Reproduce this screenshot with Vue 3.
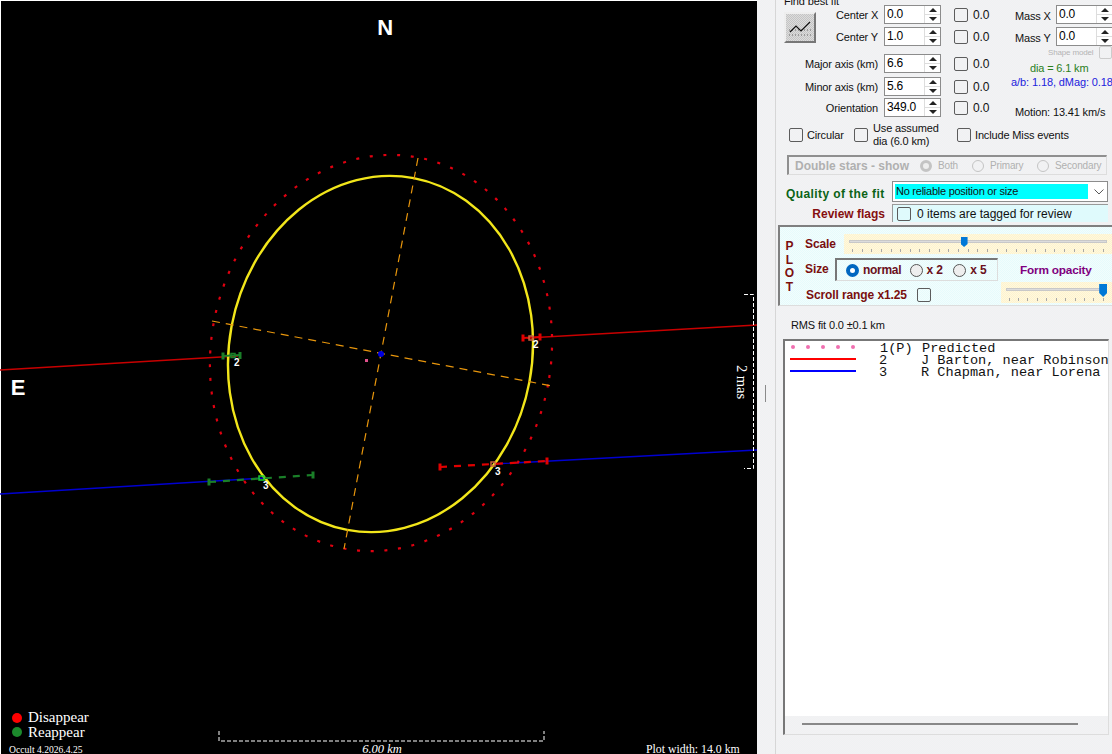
<template>
  <div class="app">
    <div class="plot">
      <svg class="plot-svg" viewBox="0 0 757 754" width="757" height="754">
        <!-- chords -->
        <path d="M0 370 L238 356 M527 338 L757 325" stroke="#c80000" stroke-width="1.4" fill="none" />
        <path d="M0 494 L265 478 M493 464 L757 450" stroke="#0000d0" stroke-width="1.4" fill="none" />

        <!-- predicted + fitted shape -->
        <ellipse cx="381" cy="353" rx="170" ry="199" transform="rotate(10.7 381 353)" fill="none" stroke="#e00010" stroke-width="2.2" stroke-dasharray="3 10.7" />
        <ellipse cx="380.5" cy="354" rx="151.500" ry="179" transform="rotate(10.7 380.5 354)" fill="none" stroke="#f2e61a" stroke-width="2.4" />
        <path d="M418 158 L344 549 M212 321 L552 386" stroke="#e8960c" stroke-width="1.2" stroke-dasharray="8 6" fill="none" />
        <circle cx="381" cy="354" r="3" fill="#0000e0" />
        <rect x="365" y="359" width="3" height="3" fill="#e0508c" />

        <!-- event markers -->
        <g stroke="#1a7f28" fill="none" stroke-width="2">
          <path d="M223 356 L240 355" />
          <path d="M223 352.500 V359.500 M240 352 V359" stroke-width="3" />
          <rect x="231" y="353.500" width="4" height="4" stroke-width="1.5" />
          <path d="M209 482 L313 475" stroke-dasharray="7 7" stroke-width="2.2" />
          <path d="M209 478.500 V485.500 M313 471.500 V478.500" stroke-width="3" />
          <rect x="259" y="476" width="5" height="4" stroke="#18d030" stroke-width="1.5" />
        </g>
        <g stroke="#e00000" fill="none" stroke-width="2">
          <path d="M523 338 L540 337" />
          <path d="M523 334.500 V341.500 M540 333.500 V340.500" stroke-width="3" />
          <path d="M440 467 L547 461" stroke-dasharray="7 7" stroke-width="2.2" />
          <path d="M440 463.500 V470.500 M547 457.500 V464.500" stroke-width="3" />
          <rect x="491" y="462" width="4" height="4" stroke="#c8603c" stroke-width="1.5" />
          <rect x="529" y="336" width="4" height="4" stroke="#c8603c" stroke-width="1.5" />
        </g>
        <g class="chord-no">
          <text x="234" y="366">2</text>
          <text x="533" y="348">2</text>
          <text x="263" y="489">3</text>
          <text x="495" y="475">3</text>
        </g>

        <text class="compass" x="385" y="35" text-anchor="middle">N</text>
        <text class="compass" x="18" y="395" text-anchor="middle">E</text>

        <!-- scale bars -->
        <path d="M219 731 V741 H544 V731" class="scale-line" />
        <path d="M744 294.500 H753.500 V468.500 H744" class="scale-line" />
        <text class="serif small" x="382" y="753" text-anchor="middle" font-style="italic">6.00 km</text>
        <text class="serif mas" transform="translate(737 382) rotate(90)" text-anchor="middle">2 mas</text>
        <text class="serif plot-width" x="646" y="753">Plot width: 14.0 km</text>

        <circle cx="17" cy="718" r="5" fill="#ff0000" />
        <circle cx="17" cy="732" r="5" fill="#1c8a2c" />
        <text class="serif legend" x="28" y="722">Disappear</text>
        <text class="serif legend" x="28" y="737">Reappear</text>
        <text class="serif tiny" x="9" y="753">Occult 4.2026.4.25</text>
      </svg>
    </div>

    <div class="panel">
      <div class="gutter"><span class="grip"></span></div>
      <div class="content">
        <div class="fit-title">Find best fit</div>

        <div class="fit-grid">
          <button class="fit-btn">
            <svg width="26" height="24" viewBox="0 0 26 24">
              <path d="M2 19 H24 M2 14 H24" stroke="#666" stroke-dasharray="1 2" fill="none" />
              <path d="M3 16 L9 10 L14 15 L23 6" stroke="#111" stroke-width="1.2" fill="none" />
            </svg>
          </button>

          <template v-for="row in fitRows" :key="row.label">
            <label class="fit-label" :class="{ wide: row.wide }">{{ row.label }}</label>
            <div class="spin">
              <input class="spin-input" :value="row.value" readonly />
              <span class="spin-btns"><i class="up"></i><i class="down"></i></span>
            </div>
            <div class="step">
              <input type="checkbox" class="check" />
              <span>0.0</span>
            </div>
          </template>

          <div class="mass-col">
            <div v-for="m in massRows" :key="m" class="mass-row">
              <label>{{ m }}</label>
              <div class="spin">
                <input class="spin-input" value="0.0" readonly />
                <span class="spin-btns"><i class="up"></i><i class="down"></i></span>
              </div>
            </div>
            <div class="shape-row">
              <span>Shape model</span>
              <input type="checkbox" class="check faint" />
            </div>
            <div class="dia">dia = 6.1 km</div>
            <div class="ratio">a/b: 1.18, dMag: 0.18</div>
            <div class="motion">Motion: 13.41 km/s</div>
          </div>
        </div>

        <div class="options">
          <input type="checkbox" class="check" />
          <span class="opt-circular">Circular</span>
          <input type="checkbox" class="check" />
          <span class="opt-assumed">Use assumed<br />dia (6.0 km)</span>
          <input type="checkbox" class="check" />
          <span>Include Miss events</span>
        </div>

        <div class="double">
          <span class="double-title">Double stars - show</span>
          <span class="d-radio on"></span><span class="d-text d-both">Both</span>
          <span class="d-radio"></span><span class="d-text d-primary">Primary</span>
          <span class="d-radio"></span><span class="d-text">Secondary</span>
        </div>

        <div class="quality">
          <span class="quality-label">Quality of the fit</span>
          <div class="combo">
            <span class="combo-value">No reliable position or size</span>
            <svg width="12" height="8" viewBox="0 0 12 8"><path d="M1.500 1.500 L6 6 L10.500 1.500" stroke="#555" fill="none" /></svg>
          </div>
        </div>

        <div class="review">
          <span class="review-label">Review flags</span>
          <div class="review-box">
            <input type="checkbox" class="check" />
            <span>0 items are tagged for review</span>
          </div>
        </div>

        <div class="plot-group">
          <div class="plot-word"><span v-for="c in 'PLOT'" :key="c">{{ c }}</span></div>
          <div class="plot-controls">
            <div class="scale-row">
              <span class="red-label scale-label">Scale</span>
              <div class="slider scale-slider">
                <div class="track"></div>
                <div class="thumb" :style="{ left: '43.500%' }"></div>
                <div class="ticks"><i v-for="n in 27" :key="n"></i></div>
              </div>
            </div>
            <div class="size-row">
              <span class="red-label size-label">Size</span>
              <div class="size-box">
                <span class="radio on"></span><span class="size-text s-normal">normal</span>
                <span class="radio"></span><span class="size-text s-x2">x 2</span>
                <span class="radio"></span><span class="size-text">x 5</span>
              </div>
              <span class="opacity-label">Form opacity</span>
            </div>
            <div class="scroll-row">
              <span class="red-label scroll-label">Scroll range x1.25</span>
              <input type="checkbox" class="check" />
              <div class="slider opacity-slider">
                <div class="track"></div>
                <div class="thumb big" :style="{ left: '88.500%' }"></div>
                <div class="ticks"><i v-for="n in 11" :key="n"></i></div>
              </div>
            </div>
          </div>
        </div>

        <div class="rms">RMS fit 0.0 ±0.1 km</div>

        <div class="list">
          <div class="list-body">
            <div class="list-row">
              <span class="sample dots"><i v-for="n in 5" :key="n"></i></span>
              <span class="l-no">1(P)</span><span class="l-name">Predicted</span>
            </div>
            <div class="list-row">
              <span class="sample line red"></span>
              <span class="l-no">2</span><span class="l-name">J Barton, near Robinson</span>
            </div>
            <div class="list-row">
              <span class="sample line blue"></span>
              <span class="l-no">3</span><span class="l-name">R Chapman, near Lorena</span>
            </div>
          </div>
          <div class="list-scroll"><span></span></div>
        </div>
      </div>
    </div>
  </div>
</template>

<script setup>
const fitRows = [
  { label: 'Center X', value: '0.0' },
  { label: 'Center Y', value: '1.0' },
  { label: 'Major axis (km)', value: '6.6', wide: true },
  { label: 'Minor axis (km)', value: '5.6', wide: true },
  { label: 'Orientation', value: '349.0', wide: true }
];

const massRows = ['Mass X', 'Mass Y'];
</script>

<style>
html,
body {
  margin: 0;
  background: #000;
  overflow: hidden;
}
</style>

<style scoped>
.app {
  width: 1112px;
  height: 754px;
  display: flex;
  overflow: hidden;
  font-family: "Liberation Sans", Arial, sans-serif;
  font-size: 11px;
  letter-spacing: -0.15px;
  color: #111;
}

/* plot */
.plot {
  width: 757px;
  height: 754px;
  flex: none;
  background: #000;
  border-left: 1px solid #fff;
  border-top: 1px solid #fff;
  box-sizing: border-box;
}

.plot-svg {
  display: block;
  margin: -1px 0 0 -1px;
}

.chord-no text {
  fill: #fff;
  font: bold 10px "Liberation Sans", sans-serif;
}

.compass {
  fill: #fff;
  font: bold 22px "Liberation Sans", sans-serif;
}

.scale-line {
  fill: none;
  stroke: #fff;
  stroke-width: 1;
  stroke-dasharray: 4 2;
}

.serif {
  fill: #fff;
  font-family: "Liberation Serif", serif;
  letter-spacing: 0;
}

.small {
  font-size: 12.5px;
}

.mas {
  font-size: 14.5px;
}

.plot-width {
  font-size: 11.800px;
}

.legend {
  font-size: 15px;
}

.tiny {
  font-size: 9.600px;
}

/* right side */
.panel {
  flex: 1;
  min-width: 0;
  display: flex;
  background: repeating-conic-gradient(#f4f0f4 0 25%, #eef3f2 0 50%) 0 0 / 2px 2px;
}

.gutter {
  width: 18px;
  flex: none;
  border-right: 1px solid #d6d6d6;
  box-sizing: content-box;
  padding-top: 385px;
  height: 369px;
}

.grip {
  display: block;
  width: 1px;
  height: 17px;
  margin-left: 8px;
  background: #8a8a8a;
}

.content {
  flex: 1;
  min-width: 0;
  overflow: hidden;
}

.fit-title {
  height: 5px;
  line-height: 2px;
  padding-left: 8px;
  white-space: nowrap;
}

.fit-grid {
  display: grid;
  grid-template-columns: 60px 48px 57px 72px 99px;
  grid-template-rows: 22px 27px 23px 21px 21px;
  width: 336px;
}

.fit-btn {
  grid-column: 1;
  grid-row: 1 / 3;
  width: 32px;
  height: 31px;
  margin: 7px 0 0 8px;
  padding: 0;
  background: repeating-conic-gradient(#dcdcdc 0 25%, #c4c4c4 0 50%) 0 0 / 2px 2px;
  border: 2px solid;
  border-color: #eee #777 #777 #eee;
  display: flex;
  align-items: center;
  justify-content: center;
}

.fit-label {
  height: 19px;
  line-height: 21px;
  text-align: right;
  padding-right: 6px;
  white-space: nowrap;
  grid-column: 2;
}

.fit-label.wide {
  grid-column: 1 / 3;
}

.spin {
  width: 57px;
  height: 19px;
  flex: none;
  box-sizing: border-box;
  border: 1px solid #8c8c8c;
  background: #fff;
  display: flex;
}

.spin-input {
  width: 38px;
  flex: 1;
  min-width: 0;
  border: 0;
  padding: 0 0 1px 2px;
  font: 12px "Liberation Sans", sans-serif;
  letter-spacing: -0.2px;
  color: #000;
  background: transparent;
  outline: none;
}

.spin-btns {
  width: 15px;
  flex: none;
  display: flex;
  flex-direction: column;
  border-left: 1px solid #ddd;
}

.spin-btns i {
  flex: 1;
  display: flex;
  align-items: center;
  justify-content: center;
}

.spin-btns i::before {
  content: "";
  border-left: 4px solid transparent;
  border-right: 4px solid transparent;
}

.spin-btns .up {
  border-bottom: 1px solid #ddd;
}

.spin-btns .up::before {
  border-bottom: 4px solid #222;
}

.spin-btns .down::before {
  border-top: 4px solid #222;
}

.step {
  height: 19px;
  display: flex;
  align-items: center;
  padding-left: 13px;
  gap: 5px;
  font-size: 12px;
}

.check {
  appearance: none;
  width: 14px;
  height: 14px;
  margin: 0;
  flex: none;
  box-sizing: border-box;
  border: 1px solid #5c5c5c;
  border-radius: 2px;
  background: transparent;
}

.check.faint {
  border-color: #ccc;
}

.mass-col {
  grid-column: 5;
  grid-row: 1 / 6;
  min-width: 0;
}

.mass-row {
  height: 22px;
  display: flex;
  padding-left: 2px;
  white-space: nowrap;
  line-height: 23px;
}

.mass-row label {
  width: 41px;
  flex: none;
}

.shape-row {
  display: flex;
  align-items: center;
  height: 12px;
  font-size: 8px;
  color: #b4b4b4;
  margin-top: -3px;
  padding-left: 35px;
  white-space: nowrap;
}

.shape-row span {
  width: 52px;
}

.shape-row .check {
  width: 13px;
  height: 13px;
}

.dia {
  margin-top: 3px;
  height: 14px;
  line-height: 14px;
  padding-left: 17px;
  color: #2a7f1c;
}

.ratio {
  height: 14px;
  line-height: 14px;
  color: #2222dd;
  white-space: nowrap;
  letter-spacing: -0.1px;
  margin-left: -2px;
}

.motion {
  margin-top: 16px;
  line-height: 14px;
  padding-left: 2px;
  white-space: nowrap;
}

.options {
  display: flex;
  align-items: center;
  height: 26px;
  margin-top: 3px;
  padding-left: 13px;
  white-space: nowrap;
}

.options .check {
  margin-right: 4px;
}

.opt-circular {
  width: 47px;
}

.opt-assumed {
  width: 85px;
  line-height: 13px;
  padding-left: 1px;
  box-sizing: border-box;
}

.double {
  display: flex;
  align-items: center;
  width: 320px;
  height: 20px;
  margin: 7px 0 0 11px;
  box-sizing: border-box;
  border-top: 2px solid #8f8f8f;
  border-left: 2px solid #8f8f8f;
  border-right: 1px solid #ddd;
  border-bottom: 1px solid #ddd;
  padding-left: 6px;
  color: #b0b0b0;
  white-space: nowrap;
}

.double-title {
  width: 125px;
  font-weight: bold;
  font-size: 12px;
  letter-spacing: 0;
}

.d-radio {
  width: 12px;
  height: 12px;
  flex: none;
  box-sizing: border-box;
  border: 1px solid #c4c4c4;
  border-radius: 50%;
  margin-right: 6px;
}

.d-radio.on {
  border: 3px solid #c4c4c4;
  background: #eee;
}

.d-text {
  font-size: 10px;
  width: 46px;
}

.d-both {
  width: 34px;
}

.d-primary {
  width: 47px;
}

.quality {
  display: flex;
  height: 21px;
  margin-top: 6px;
  padding-left: 10px;
}

.quality-label {
  width: 106px;
  line-height: 27px;
  font-weight: bold;
  font-size: 12px;
  letter-spacing: 0.4px;
  color: #0b6316;
  white-space: nowrap;
}

.combo {
  width: 216px;
  height: 21px;
  box-sizing: border-box;
  background: #fff;
  border: 1px solid #8c8c8c;
  padding: 2px;
  display: flex;
  align-items: center;
  gap: 5px;
}

.combo-value {
  width: 194px;
  height: 15px;
  line-height: 15px;
  background: #00ffff;
  white-space: nowrap;
  padding-left: 1px;
  box-sizing: border-box;
  font-size: 11px;
  letter-spacing: -0.25px;
}

.review {
  display: flex;
  height: 18px;
  margin-top: 2px;
}

.review-label {
  width: 116px;
  padding-right: 7px;
  box-sizing: border-box;
  text-align: right;
  font-weight: bold;
  font-size: 12px;
  letter-spacing: 0;
  line-height: 20px;
  color: #860f0f;
  white-space: nowrap;
}

.review-box {
  width: 216px;
  box-sizing: border-box;
  background: #dffafc;
  border-top: 1px solid #999;
  border-left: 1px solid #999;
  display: flex;
  align-items: center;
  gap: 6px;
  padding-left: 4px;
  font-size: 12px;
  letter-spacing: 0;
}

.plot-group {
  display: flex;
  width: 334px;
  height: 81px;
  margin: 3px 0 0 2px;
  box-sizing: border-box;
  background: repeating-conic-gradient(#e6fbfc 0 25%, #f2fdfd 0 50%) 0 0 / 2px 2px;
  border-top: 2px solid #7f7f7f;
  border-left: 2px solid #7f7f7f;
  border-bottom: 1px solid #ddd;
}

.plot-word {
  width: 25px;
  flex: none;
  padding: 13px 6px 0 0;
  display: flex;
  flex-direction: column;
  align-items: center;
  color: #7a0f0f;
  font-weight: bold;
  font-size: 12px;
  line-height: 13.500px;
  letter-spacing: 0;
  box-sizing: border-box;
}

.plot-controls {
  flex: 1;
  min-width: 0;
}

.red-label {
  color: #7a0f0f;
  font-weight: bold;
  font-size: 12px;
  letter-spacing: -0.1px;
  white-space: nowrap;
}

.scale-row {
  display: flex;
  height: 27px;
  padding-top: 7px;
  box-sizing: border-box;
}

.scale-label {
  width: 39px;
  line-height: 20px;
}

.slider {
  position: relative;
  background: repeating-conic-gradient(#fff3cc 0 25%, #fdf8e0 0 50%) 0 0 / 2px 2px;
}

.scale-slider {
  width: 268px;
  height: 20px;
}

.track {
  position: absolute;
  left: 5px;
  right: 5px;
  top: 6px;
  height: 3px;
  background: #dcdcdc;
  border: 1px solid #c8c8c8;
  box-sizing: border-box;
}

.thumb {
  position: absolute;
  top: 3px;
  width: 7px;
  height: 10px;
  background: #0078d7;
  clip-path: polygon(0 0, 100% 0, 100% 70%, 50% 100%, 0 70%);
}

.thumb.big {
  top: 2px;
  width: 8px;
  height: 13px;
}

.ticks {
  position: absolute;
  left: 8px;
  right: 8px;
  bottom: 2px;
  display: flex;
  justify-content: space-between;
}

.ticks i {
  width: 1px;
  height: 3px;
  background: #a8a8a8;
}

.size-row {
  display: flex;
  height: 23px;
  margin-top: 4px;
}

.size-label {
  width: 30px;
  line-height: 22px;
}

.size-box {
  width: 163px;
  height: 23px;
  box-sizing: border-box;
  border-top: 2px solid #777;
  border-left: 2px solid #777;
  border-right: 1px solid #ddd;
  border-bottom: 1px solid #ddd;
  display: flex;
  align-items: center;
  padding-left: 9px;
  white-space: nowrap;
}

.radio {
  width: 13px;
  height: 13px;
  flex: none;
  box-sizing: border-box;
  border: 1px solid #555;
  border-radius: 50%;
  background: #eee;
  margin-right: 4px;
}

.radio.on {
  border: 4px solid #0067c0;
  background: #fff;
}

.size-text {
  font-weight: bold;
  color: #6a1020;
  font-size: 12px;
  letter-spacing: -0.1px;
  width: 27px;
}

.s-normal {
  width: 47px;
  letter-spacing: -0.3px;
}

.opacity-label {
  margin-left: 22px;
  line-height: 24px;
  color: #80007f;
  font-weight: bold;
  font-size: 11.800px;
  letter-spacing: -0.2px;
  white-space: nowrap;
}

.scroll-row {
  display: flex;
  align-items: flex-start;
  height: 24px;
}

.scroll-label {
  width: 111px;
  margin-top: 8px;
  line-height: 13px;
  margin-left: 1px;
}

.scroll-row .check {
  margin-top: 7px;
}

.opacity-slider {
  width: 112px;
  height: 21px;
  margin-left: 70px;
  margin-top: 1px;
}

.rms {
  margin: 12px 0 0 15px;
  height: 14px;
  line-height: 14px;
  white-space: nowrap;
}

.list {
  width: 326px;
  height: 396px;
  margin: 7px 0 0 7px;
  box-sizing: border-box;
  border-top: 2px solid #777;
  border-left: 2px solid #777;
  border-right: 1px solid #ddd;
  border-bottom: 1px solid #ddd;
  display: flex;
  flex-direction: column;
}

.list-body {
  flex: 1;
  background: #fff;
  padding-top: 2px;
  overflow: hidden;
}

.list-row {
  display: flex;
  align-items: center;
  height: 12px;
  font: 13.600px/12px "Liberation Mono", monospace;
  letter-spacing: 0;
  white-space: nowrap;
  color: #111;
}

.sample {
  width: 66px;
  margin: -5px 0 0 5px;
  flex: none;
}

.sample.line {
  height: 2px;
}

.sample.red {
  background: #ff0000;
}

.sample.blue {
  background: #0000ff;
}

.dots {
  display: flex;
  gap: 11px;
  padding-left: 1px;
}

.dots i {
  width: 4px;
  height: 4px;
  border-radius: 50%;
  background: #f070b0;
}

.l-no {
  width: 42px;
  margin-left: 23px;
  flex: none;
}

.list-scroll {
  height: 18px;
  flex: none;
  padding: 7px 0 0 17px;
  box-sizing: border-box;
}

.list-scroll span {
  display: block;
  width: 276px;
  height: 2px;
  background: #888;
}
</style>
